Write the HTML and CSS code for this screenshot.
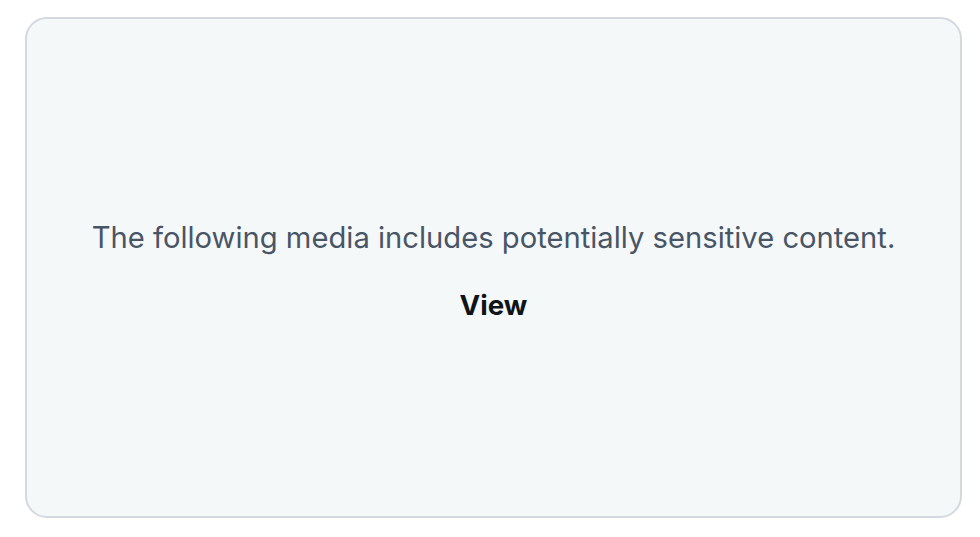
FILE: index.html
```html
<!DOCTYPE html>
<html>
<head>
<meta charset="utf-8">
<link rel="stylesheet" href="styles.css">
</head>
<body>
<div class="card">
  <p class="msg">The following media includes potentially sensitive content.</p>
  <button class="view">View</button>
</div>
</body>
</html>
```
FILE: styles.css
```css
html, body { margin: 0; padding: 0; background: #ffffff; }
body { padding: 17px 18px 0 25px; font-family: Inter, "Liberation Sans", Arial, sans-serif; }
.card {
  box-sizing: border-box;
  width: 937px;
  height: 501px;
  border: 2px solid #d3d9de;
  border-radius: 22px;
  background: #f5f8f8;
  display: flex;
  flex-direction: column;
  align-items: center;
  justify-content: center;
  padding-top: 6px;
}
.msg {
  margin: 0;
  font-size: 29.2px;
  color: #485566;
  line-height: 36px;
}
.view {
  margin-top: 32px;
  border: none;
  background: none;
  font-family: inherit;
  font-weight: bold;
  font-size: 27.7px;
  color: #0f1419;
  padding: 0;
  line-height: 34px;
}
```
